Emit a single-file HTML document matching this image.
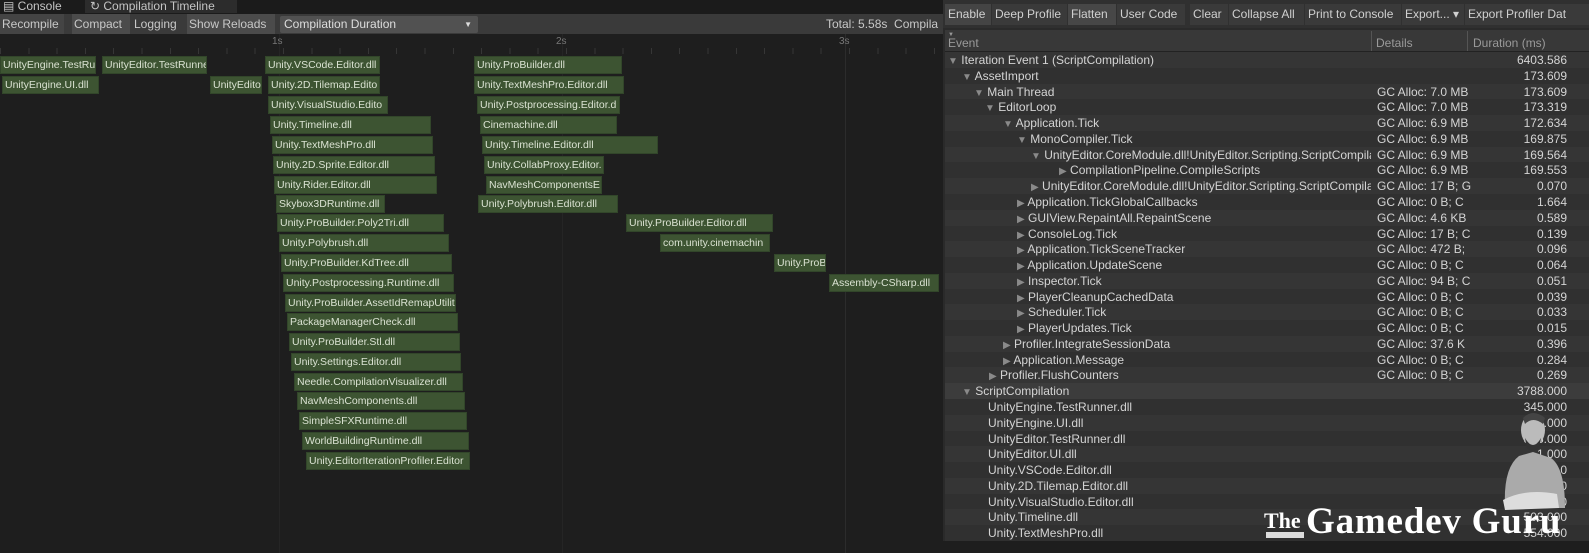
<!DOCTYPE html>
<html><head><meta charset="utf-8"><style>
*{margin:0;padding:0;box-sizing:border-box}
body{width:1589px;height:553px;background:#1e1e1e;font-family:"Liberation Sans",sans-serif;overflow:hidden;position:relative;color:#c8c8c8}
.a{position:absolute;white-space:nowrap;overflow:hidden}
.tab{top:0;height:13px;font-size:12px;line-height:12px;color:#c4c4c4}
.tb{top:14px;height:20px;font-size:12px;line-height:20px;color:#c8c8c8;padding-left:2px}
.bar{height:18px;background:#3d5432;border:1px solid #32462a;font-size:10.5px;line-height:16px;color:#dae2d2;padding-left:2px}
.rt{font-size:12px;line-height:16px;color:#d2d2d2}
.btn{top:4px;height:21px;background:#3a3a3a;font-size:12px;line-height:21px;color:#d0d0d0;padding-left:3px}
.row{left:945px;width:644px;height:16px;font-size:12px;line-height:16px;color:#d4d4d4}
.row span{position:absolute;top:0}
.d{left:432px}.v{right:22px}
.tri{color:#8a8a8a;font-size:10px;font-style:normal}
</style></head><body>
<div class="a" style="left:0;top:0;width:943px;height:14px;background:#1b1b1b"></div>
<div class="a tab" style="left:0;width:80px;padding-left:3px">&#9636; Console</div>
<div class="a tab" style="left:85px;width:152px;background:#2c2c2c;padding-left:5px">&#8635; Compilation Timeline</div>
<div class="a" style="left:0;top:14px;width:943px;height:20px;background:#3a3a3a"></div>
<div class="a tb" style="left:0;width:64px;background:#444">Recompile</div>
<div class="a tb" style="left:72px;width:58px;background:#4b4b4b">Compact</div>
<div class="a tb" style="left:132px;width:52px">Logging</div>
<div class="a tb" style="left:187px;width:88px;background:#4b4b4b">Show Reloads</div>
<div class="a tb" style="left:280px;top:16px;height:17px;line-height:17px;width:198px;background:#515151;border-radius:2px;padding-left:4px;color:#ddd">Compilation Duration<span style="position:absolute;right:6px;font-size:8px">&#9660;</span></div>
<div class="a tb" style="left:824px;width:120px">Total: 5.58s &nbsp;Compila</div>
<div class="a" style="left:279px;top:34px;width:1px;height:519px;background:#252525"></div>
<div class="a" style="left:562px;top:34px;width:1px;height:519px;background:#252525"></div>
<div class="a" style="left:845px;top:34px;width:1px;height:519px;background:#2c2c2c"></div>
<div class="a" style="left:272px;top:36px;font-size:10px;color:#777">1s</div>
<div class="a" style="left:556px;top:36px;font-size:10px;color:#777">2s</div>
<div class="a" style="left:839px;top:36px;font-size:10px;color:#777">3s</div>
<div class="a" style="left:0;top:48px;width:943px;height:6px;background:repeating-linear-gradient(90deg,#363636 0 1px,transparent 1px 28.3px)"></div>

<div class="a bar" style="left:0;top:56px;width:96px">UnityEngine.TestRu</div>
<div class="a bar" style="left:102px;top:56px;width:105px">UnityEditor.TestRunne</div>
<div class="a bar" style="left:265px;top:56px;width:115px">Unity.VSCode.Editor.dll</div>
<div class="a bar" style="left:474px;top:56px;width:148px">Unity.ProBuilder.dll</div>
<div class="a bar" style="left:2px;top:76px;width:97px">UnityEngine.UI.dll</div>
<div class="a bar" style="left:210px;top:76px;width:52px">UnityEdito</div>
<div class="a bar" style="left:268px;top:76px;width:112px">Unity.2D.Tilemap.Edito</div>
<div class="a bar" style="left:474px;top:76px;width:150px">Unity.TextMeshPro.Editor.dll</div>
<div class="a bar" style="left:268px;top:96px;width:120px">Unity.VisualStudio.Edito</div>
<div class="a bar" style="left:477px;top:96px;width:143px">Unity.Postprocessing.Editor.d</div>
<div class="a bar" style="left:270px;top:116px;width:161px">Unity.Timeline.dll</div>
<div class="a bar" style="left:480px;top:116px;width:137px">Cinemachine.dll</div>
<div class="a bar" style="left:272px;top:136px;width:161px">Unity.TextMeshPro.dll</div>
<div class="a bar" style="left:482px;top:136px;width:176px">Unity.Timeline.Editor.dll</div>
<div class="a bar" style="left:273px;top:156px;width:162px">Unity.2D.Sprite.Editor.dll</div>
<div class="a bar" style="left:484px;top:156px;width:120px">Unity.CollabProxy.Editor.</div>
<div class="a bar" style="left:274px;top:176px;width:163px">Unity.Rider.Editor.dll</div>
<div class="a bar" style="left:486px;top:176px;width:116px">NavMeshComponentsE</div>
<div class="a bar" style="left:276px;top:195px;width:109px">Skybox3DRuntime.dll</div>
<div class="a bar" style="left:478px;top:195px;width:140px">Unity.Polybrush.Editor.dll</div>
<div class="a bar" style="left:277px;top:214px;width:167px">Unity.ProBuilder.Poly2Tri.dll</div>
<div class="a bar" style="left:626px;top:214px;width:147px">Unity.ProBuilder.Editor.dll</div>
<div class="a bar" style="left:279px;top:234px;width:170px">Unity.Polybrush.dll</div>
<div class="a bar" style="left:660px;top:234px;width:110px">com.unity.cinemachin</div>
<div class="a bar" style="left:281px;top:254px;width:171px">Unity.ProBuilder.KdTree.dll</div>
<div class="a bar" style="left:774px;top:254px;width:52px">Unity.ProB</div>
<div class="a bar" style="left:283px;top:274px;width:171px">Unity.Postprocessing.Runtime.dll</div>
<div class="a bar" style="left:829px;top:274px;width:110px">Assembly-CSharp.dll</div>
<div class="a bar" style="left:285px;top:294px;width:171px">Unity.ProBuilder.AssetIdRemapUtilit</div>
<div class="a bar" style="left:287px;top:313px;width:171px">PackageManagerCheck.dll</div>
<div class="a bar" style="left:289px;top:333px;width:171px">Unity.ProBuilder.Stl.dll</div>
<div class="a bar" style="left:291px;top:353px;width:170px">Unity.Settings.Editor.dll</div>
<div class="a bar" style="left:294px;top:373px;width:169px">Needle.CompilationVisualizer.dll</div>
<div class="a bar" style="left:297px;top:392px;width:168px">NavMeshComponents.dll</div>
<div class="a bar" style="left:299px;top:412px;width:168px">SimpleSFXRuntime.dll</div>
<div class="a bar" style="left:302px;top:432px;width:167px">WorldBuildingRuntime.dll</div>
<div class="a bar" style="left:306px;top:452px;width:164px">Unity.EditorIterationProfiler.Editor</div>

<div class="a" style="left:943px;top:0;width:646px;height:553px;background:#2a2a2a"></div>
<div class="a" style="left:943px;top:0;width:646px;height:28px;background:#303030"></div>
<div class="a btn" style="left:945px;width:46px;background:#444">Enable</div>
<div class="a btn" style="left:992px;width:75px">Deep Profile</div>
<div class="a btn" style="left:1068px;width:48px;background:#474747">Flatten</div>
<div class="a btn" style="left:1117px;width:68px">User Code</div>
<div class="a btn" style="left:1190px;width:38px">Clear</div>
<div class="a btn" style="left:1229px;width:75px">Collapse All</div>
<div class="a btn" style="left:1305px;width:96px">Print to Console</div>
<div class="a btn" style="left:1402px;width:62px">Export... &#9662;</div>
<div class="a btn" style="left:1465px;width:124px">Export Profiler Dat</div>
<div class="a" style="left:945px;top:30px;width:644px;height:22px;background:#383838;border-bottom:1px solid #222"></div>
<div class="a" style="left:948px;top:32px;font-size:6px;color:#999">&#9660;</div>
<div class="a rt" style="left:948px;top:35px;color:#9a9a9a">Event</div>
<div class="a" style="left:1371px;top:31px;width:1px;height:20px;background:#555"></div>
<div class="a rt" style="left:1376px;top:35px;color:#9a9a9a">Details</div>
<div class="a" style="left:1467px;top:31px;width:1px;height:20px;background:#555"></div>
<div class="a rt" style="left:1473px;top:35px;color:#9a9a9a">Duration (ms)</div>

<div class="a row" style="top:52px;background:#353535"><span style="left:3px"><i class="tri">&#9660;</i> Iteration Event 1 (ScriptCompilation)</span><span class="v">6403.586</span></div>
<div class="a row" style="top:68px;background:#303030"><span style="left:17px"><i class="tri">&#9660;</i> AssetImport</span><span class="v">173.609</span></div>
<div class="a row" style="top:84px;background:#353535"><span style="left:29px"><i class="tri">&#9660;</i> Main Thread</span><span class="d">GC Alloc: 7.0 MB</span><span class="v">173.609</span></div>
<div class="a row" style="top:99px;background:#303030"><span style="left:40px"><i class="tri">&#9660;</i> EditorLoop</span><span class="d">GC Alloc: 7.0 MB</span><span class="v">173.319</span></div>
<div class="a row" style="top:115px;background:#353535"><span style="left:58px"><i class="tri">&#9660;</i> Application.Tick</span><span class="d">GC Alloc: 6.9 MB</span><span class="v">172.634</span></div>
<div class="a row" style="top:131px;background:#303030"><span style="left:72px"><i class="tri">&#9660;</i> MonoCompiler.Tick</span><span class="d">GC Alloc: 6.9 MB</span><span class="v">169.875</span></div>
<div class="a row" style="top:147px;background:#353535"><span style="left:86px;width:340px;overflow:hidden"><i class="tri">&#9660;</i> UnityEditor.CoreModule.dll!UnityEditor.Scripting.ScriptCompilation</span><span class="d">GC Alloc: 6.9 MB</span><span class="v">169.564</span></div>
<div class="a row" style="top:162px;background:#303030"><span style="left:114px"><i class="tri">&#9654;</i> CompilationPipeline.CompileScripts</span><span class="d">GC Alloc: 6.9 MB</span><span class="v">169.553</span></div>
<div class="a row" style="top:178px;background:#353535"><span style="left:86px;width:340px;overflow:hidden"><i class="tri">&#9654;</i> UnityEditor.CoreModule.dll!UnityEditor.Scripting.ScriptCompilation</span><span class="d">GC Alloc: 17 B; G</span><span class="v">0.070</span></div>
<div class="a row" style="top:194px;background:#303030"><span style="left:72px"><i class="tri">&#9654;</i> Application.TickGlobalCallbacks</span><span class="d">GC Alloc: 0 B; C</span><span class="v">1.664</span></div>
<div class="a row" style="top:210px;background:#353535"><span style="left:72px"><i class="tri">&#9654;</i> GUIView.RepaintAll.RepaintScene</span><span class="d">GC Alloc: 4.6 KB</span><span class="v">0.589</span></div>
<div class="a row" style="top:226px;background:#303030"><span style="left:72px"><i class="tri">&#9654;</i> ConsoleLog.Tick</span><span class="d">GC Alloc: 17 B; C</span><span class="v">0.139</span></div>
<div class="a row" style="top:241px;background:#353535"><span style="left:72px"><i class="tri">&#9654;</i> Application.TickSceneTracker</span><span class="d">GC Alloc: 472 B;</span><span class="v">0.096</span></div>
<div class="a row" style="top:257px;background:#303030"><span style="left:72px"><i class="tri">&#9654;</i> Application.UpdateScene</span><span class="d">GC Alloc: 0 B; C</span><span class="v">0.064</span></div>
<div class="a row" style="top:273px;background:#353535"><span style="left:72px"><i class="tri">&#9654;</i> Inspector.Tick</span><span class="d">GC Alloc: 94 B; C</span><span class="v">0.051</span></div>
<div class="a row" style="top:289px;background:#303030"><span style="left:72px"><i class="tri">&#9654;</i> PlayerCleanupCachedData</span><span class="d">GC Alloc: 0 B; C</span><span class="v">0.039</span></div>
<div class="a row" style="top:304px;background:#353535"><span style="left:72px"><i class="tri">&#9654;</i> Scheduler.Tick</span><span class="d">GC Alloc: 0 B; C</span><span class="v">0.033</span></div>
<div class="a row" style="top:320px;background:#303030"><span style="left:72px"><i class="tri">&#9654;</i> PlayerUpdates.Tick</span><span class="d">GC Alloc: 0 B; C</span><span class="v">0.015</span></div>
<div class="a row" style="top:336px;background:#353535"><span style="left:58px"><i class="tri">&#9654;</i> Profiler.IntegrateSessionData</span><span class="d">GC Alloc: 37.6 K</span><span class="v">0.396</span></div>
<div class="a row" style="top:352px;background:#303030"><span style="left:58px"><i class="tri">&#9654;</i> Application.Message</span><span class="d">GC Alloc: 0 B; C</span><span class="v">0.284</span></div>
<div class="a row" style="top:367px;background:#353535"><span style="left:44px"><i class="tri">&#9654;</i> Profiler.FlushCounters</span><span class="d">GC Alloc: 0 B; C</span><span class="v">0.269</span></div>
<div class="a row" style="top:383px;background:#3c3c3c"><span style="left:17px"><i class="tri">&#9660;</i> ScriptCompilation</span><span class="v">3788.000</span></div>
<div class="a row" style="top:399px;background:#303030"><span style="left:43px">UnityEngine.TestRunner.dll</span><span class="v">345.000</span></div>
<div class="a row" style="top:415px;background:#353535"><span style="left:43px">UnityEngine.UI.dll</span><span class="v">345.000</span></div>
<div class="a row" style="top:431px;background:#303030"><span style="left:43px">UnityEditor.TestRunner.dll</span><span class="v">345.000</span></div>
<div class="a row" style="top:446px;background:#353535"><span style="left:43px">UnityEditor.UI.dll</span><span class="v">1.000</span></div>
<div class="a row" style="top:462px;background:#303030"><span style="left:43px">Unity.VSCode.Editor.dll</span><span class="v">0</span></div>
<div class="a row" style="top:478px;background:#353535"><span style="left:43px">Unity.2D.Tilemap.Editor.dll</span><span class="v">0</span></div>
<div class="a row" style="top:494px;background:#303030"><span style="left:43px">Unity.VisualStudio.Editor.dll</span><span class="v">0</span></div>
<div class="a row" style="top:509px;background:#353535"><span style="left:43px">Unity.Timeline.dll</span><span class="v">503.000</span></div>
<div class="a row" style="top:525px;background:#303030"><span style="left:43px">Unity.TextMeshPro.dll</span><span class="v">554.000</span></div>
<div class="a" style="left:943px;top:541px;width:646px;height:12px;background:#1e1e1e"></div>

<svg class="a" style="left:1495px;top:408px" width="72" height="108" viewBox="0 0 72 108">
<ellipse cx="38" cy="22" rx="12" ry="16" fill="#bbb"/>
<path d="M28 10 Q38 0 50 10 L48 16 Q38 8 30 16Z" fill="#444"/>
<path d="M30 30 Q38 44 46 30 L44 40 Q38 46 32 40Z" fill="#333"/>
<path d="M10 100 Q8 60 24 48 L38 44 L56 50 Q70 60 70 100Z" fill="#aaa"/>
<path d="M8 92 Q30 80 62 86 L64 100 L10 102Z" fill="#ddd"/>
</svg>
<div class="a" style="left:1264px;top:508px;font-family:'Liberation Serif',serif;font-weight:bold;font-size:22px;color:#fff;line-height:26px">The</div>
<div class="a" style="left:1266px;top:532px;width:38px;height:6px;background:#ddd"></div>
<div class="a" style="left:1306px;top:502px;font-family:'Liberation Serif',serif;font-weight:bold;font-size:37px;color:#fff;line-height:40px;letter-spacing:0.8px">Gamedev Guru</div>
</body></html>
